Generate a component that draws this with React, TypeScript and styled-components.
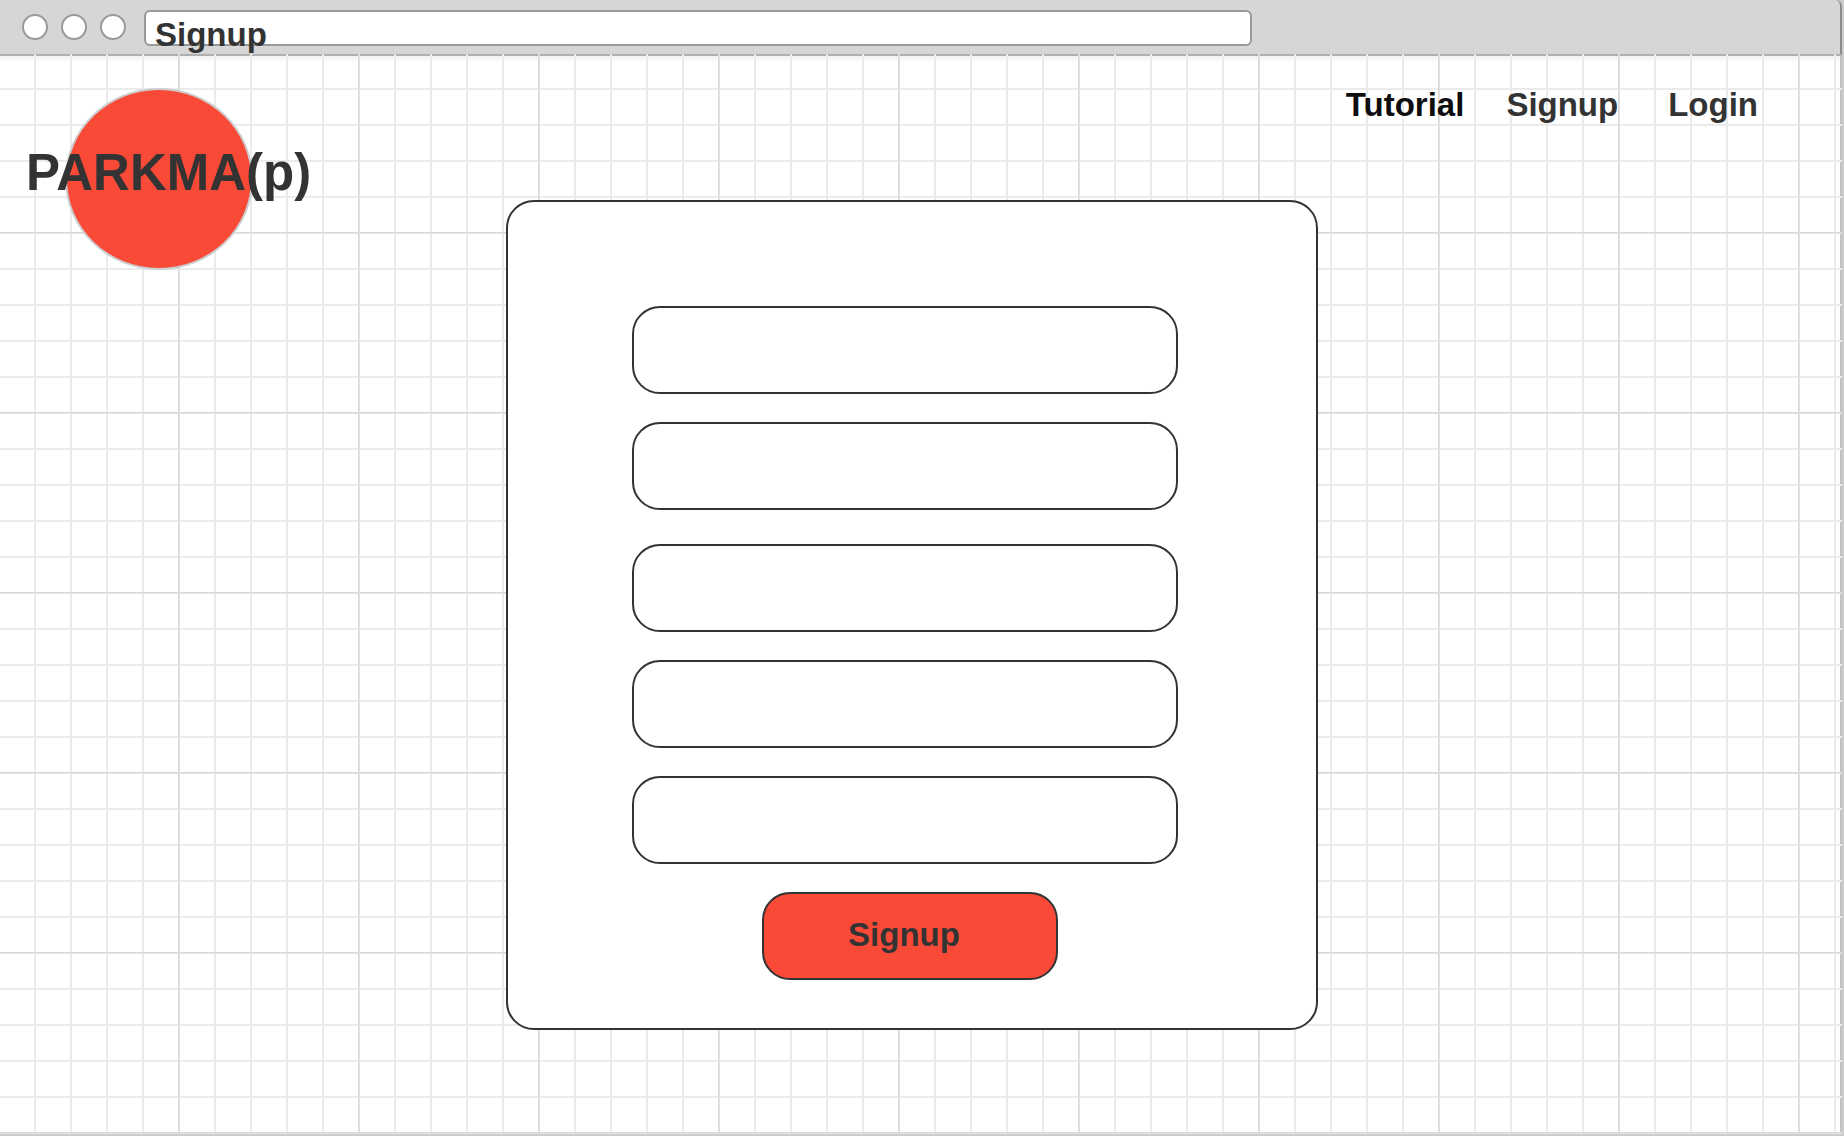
import React from "react";
import styled, { createGlobalStyle } from "styled-components";

const ink = "#333333";
const accent = "#f94a37";

const GlobalStyle = createGlobalStyle`
  *, *::before, *::after { box-sizing: border-box; }
  body {
    margin: 0;
    color: ${ink};
    background: #cbcbcb;
    font-family: "Liberation Sans", Arial, Helvetica, sans-serif;
    font-size: 33px;
    font-weight: 700;
    line-height: 38px;
  }
`;

const Window = styled.div`
  display: flex;
  flex-direction: column;
  min-height: 100vh;
  padding: 0 2px 2px 0;
`;

const TitleBar = styled.header`
  display: flex;
  align-items: flex-start;
  height: 54px;
  padding: 10px 22px 0;
  background: #d6d6d6;
  border-right: 2px solid #8c8c8c;
  border-radius: 0 6px 0 0;
`;

const WindowButtons = styled.div`
  display: flex;
  gap: 13px;
  margin: 4px 18px 0 0;
`;

const WindowButton = styled.button`
  width: 26px;
  height: 26px;
  padding: 0;
  background: #ffffff;
  border: 2px solid #999999;
  border-radius: 50%;
`;

const AddressBar = styled.div`
  flex: 0 1 1108px;
  min-width: 0;
  display: flex;
  align-items: flex-start;
  height: 36px;
  background: #ffffff;
  border: 2px solid #999999;
  border-radius: 6px;
`;

/* Taller than its bar, so the descenders hang over the lower edge. */
const AddressInput = styled.input`
  width: 100%;
  height: 42px;
  padding: 4px 8px 0 9px;
  color: inherit;
  font: inherit;
  background: none;
  border: 0;
  outline: 0;
`;

/* Fine lines every 36px, heavier ones every 180px, over the window's edges. */
const Canvas = styled.div`
  flex: 1;
  display: grid;
  grid-template-columns: minmax(0, 1fr) minmax(0, 812px) minmax(0, 1fr);
  align-items: start;
  padding: 0 18px 104px 0;
  background-color: #ffffff;
  background-image:
    linear-gradient(to right, #d9d9d9 1px, #e3e3e3 1px, #e3e3e3 2px, transparent 2px),
    linear-gradient(to bottom, #d9d9d9 1px, #e3e3e3 1px, #e3e3e3 2px, transparent 2px),
    linear-gradient(to right, #ebebeb 2px, transparent 2px),
    linear-gradient(to bottom, #ebebeb 2px, transparent 2px),
    linear-gradient(#b0b0b0, #b0b0b0),
    linear-gradient(#c2c2c2, #c2c2c2),
    linear-gradient(#d2d2d2, #d2d2d2),
    linear-gradient(#ededed, #ffffff);
  background-size:
    180px 100%, 100% 180px, 36px 100%, 100% 36px,
    100% 2px, 2px 100%, 100% 2px, 100% 8px;
  background-position:
    178px 0, 0 178px, 34px 0, 0 34px,
    0 0, 100% 0, 0 100%, 0 0;
  background-repeat:
    repeat-x, repeat-y, repeat-x, repeat-y,
    no-repeat, no-repeat, no-repeat, no-repeat;
`;

const Brand = styled.a`
  display: inline-grid;
  justify-self: start;
  align-items: center;
  margin-top: 34px;
  padding-left: 26px;
  color: inherit;
  text-decoration: none;
`;

const Disc = styled.span`
  grid-area: 1 / 1;
  width: 188px;
  height: 182px;
  margin-left: 39px;
  background: ${accent};
  border: 2px solid #cccccc;
  border-radius: 50%;
`;

const Wordmark = styled.span`
  grid-area: 1 / 1;
  font-size: 51px;
  line-height: 56px;
  padding-bottom: 12px;
  white-space: nowrap;
`;

const Card = styled.main`
  margin-top: 146px;
  padding: 104px 138px 48px 124px;
  background: #ffffff;
  border: 2px solid ${ink};
  border-radius: 28px;
`;

const Form = styled.form`
  display: flex;
  flex-direction: column;
  gap: 34px;
`;

const FieldGroup = styled.div`
  display: flex;
  flex-direction: column;
  gap: 28px;
`;

const Field = styled.input`
  width: 100%;
  height: 88px;
  padding: 0 24px;
  color: inherit;
  font: inherit;
  background: #ffffff;
  border: 2px solid ${ink};
  border-radius: 28px;
`;

const Actions = styled.div`
  display: flex;
  justify-content: center;
  padding-left: 10px;
`;

const SubmitButton = styled.button`
  width: 296px;
  height: 88px;
  padding: 0 12px 2px 0;
  color: inherit;
  font: inherit;
  background: ${accent};
  border: 2px solid ${ink};
  border-radius: 28px;
`;

const Nav = styled.nav`
  display: flex;
  justify-content: flex-end;
  gap: 42px;
  margin-top: 32px;
  padding-right: 66px;
`;

const AccountLinks = styled.div`
  display: flex;
  gap: 50px;
`;

const NavLink = styled.a<{ $current?: boolean }>`
  color: ${(p) => (p.$current ? "#0d0d0d" : ink)};
  text-decoration: none;
`;

export default function App() {
  return (
    <>
      <GlobalStyle />
      <Window>
        <TitleBar>
          <WindowButtons>
            <WindowButton type="button" aria-label="Close" />
            <WindowButton type="button" aria-label="Minimize" />
            <WindowButton type="button" aria-label="Zoom" />
          </WindowButtons>
          <AddressBar>
            <AddressInput type="text" aria-label="Address" defaultValue="Signup" />
          </AddressBar>
        </TitleBar>
        <Canvas>
          <Brand href="#home">
            <Disc />
            <Wordmark>PARKMA(p)</Wordmark>
          </Brand>
          <Card>
            <Form onSubmit={(e) => e.preventDefault()}>
              <FieldGroup>
                <Field type="text" aria-label="First name" />
                <Field type="text" aria-label="Last name" />
              </FieldGroup>
              <FieldGroup>
                <Field type="email" aria-label="Email" />
                <Field type="password" aria-label="Password" />
                <Field type="password" aria-label="Confirm password" />
                <Actions>
                  <SubmitButton type="submit">Signup</SubmitButton>
                </Actions>
              </FieldGroup>
            </Form>
          </Card>
          <Nav>
            <NavLink href="#tutorial" $current>Tutorial</NavLink>
            <AccountLinks>
              <NavLink href="#signup">Signup</NavLink>
              <NavLink href="#login">Login</NavLink>
            </AccountLinks>
          </Nav>
        </Canvas>
      </Window>
    </>
  );
}
